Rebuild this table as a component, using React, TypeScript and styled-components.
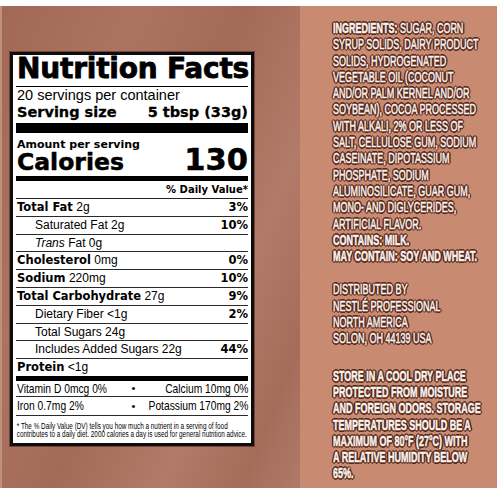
import React from 'react';
import styled, { createGlobalStyle } from 'styled-components';

const GlobalStyle = createGlobalStyle`
  html, body {
    margin: 0;
    padding: 0;
    background: #ffffff;
  }
  body {
    width: 500px;
    height: 500px;
    overflow: hidden;
  }
`;

const Package = styled.div`
  display: flex;
  width: 497px;
  height: 482px;
  margin-top: 6px;
`;

const LeftPanel = styled.div`
  width: 300px;
  box-sizing: border-box;
  padding: 46px 0 0 10px;
  background: linear-gradient(
    112deg,
    #a26856 0%,
    #ac7361 28%,
    #a46a58 50%,
    #b27a68 72%,
    #a56c5a 88%,
    #b07a68 100%
  );
  box-shadow: inset 2px 0 0 #c0907f;
`;

const RightPanel = styled.div`
  flex: 1;
  box-sizing: border-box;
  padding: 14px 0 0 33px;
  background: #c98a72;
  overflow: hidden;
`;

/* ---------- nutrition label ---------- */

const Label = styled.div`
  width: 244px;
  box-sizing: border-box;
  background: #fff;
  border: 3px solid #0d0d0d;
  box-shadow: 0 0 0 1px rgba(70, 35, 25, 0.55);
  padding: 0 3px;
  color: #000;
  font-family: 'Liberation Sans', Arial, sans-serif;
`;

const Title = styled.h1`
  margin: 0;
  padding: 0 0 4px 1px;
  font-family: 'DejaVu Sans', sans-serif;
  font-weight: 700;
  font-size: 28px;
  line-height: 27px;
  letter-spacing: -0.2px;
  -webkit-text-stroke: 0.8px #000;
  border-bottom: 1px solid #000;
  white-space: nowrap;
`;

const Servings = styled.div`
  padding-left: 1px;
  font-size: 14.5px;
  line-height: 17px;
`;

const ServingSize = styled.div`
  display: flex;
  justify-content: space-between;
  padding: 0 0 3px 1px;
  font-family: 'DejaVu Sans', sans-serif;
  font-weight: 700;
  font-size: 14.5px;
  line-height: 16px;
  -webkit-text-stroke: 0.3px #000;
`;

const Bar = styled.div<{ $h: number }>`
  height: ${({ $h }) => $h}px;
  background: #000;
`;

const AmountLabel = styled.div`
  padding: 5px 0 0 1px;
  font-family: 'DejaVu Sans', sans-serif;
  font-weight: 700;
  font-size: 11px;
  line-height: 13px;
`;

const CaloriesRow = styled.div`
  display: flex;
  justify-content: space-between;
  align-items: baseline;
  height: 25px;
  line-height: 18px;
  font-family: 'DejaVu Sans', sans-serif;
  font-weight: 700;
  -webkit-text-stroke: 0.5px #000;
`;

const CaloriesWord = styled.span`
  font-size: 23.5px;
  padding-left: 1px;
`;

const CaloriesValue = styled.span`
  font-size: 30.5px;
`;

const DVHeader = styled.div`
  height: 17px;
  line-height: 17px;
  text-align: right;
  font-family: 'DejaVu Sans', sans-serif;
  font-weight: 700;
  font-size: 10px;
  border-bottom: 1px solid #222;
`;

const Row = styled.div<{ $indent?: boolean; $last?: boolean }>`
  display: flex;
  justify-content: space-between;
  align-items: baseline;
  height: 16.8px;
  line-height: 16.8px;
  padding-left: ${({ $indent }) => ($indent ? 19 : 1)}px;
  border-bottom: ${({ $last }) => ($last ? 'none' : '1px solid #2a2a2a')};
  font-size: 12px;
  white-space: nowrap;
`;

const B = styled.b`
  font-family: 'DejaVu Sans', sans-serif;
  font-weight: 700;
  font-size: 11.5px;
`;

const Pct = styled.b`
  font-family: 'DejaVu Sans', sans-serif;
  font-weight: 700;
  font-size: 11.5px;
`;

const MineralRow = styled.div<{ $h: number }>`
  display: flex;
  align-items: center;
  height: ${({ $h }) => $h}px;
  padding-left: 1px;
  border-bottom: 1px solid #2a2a2a;
  font-family: 'Liberation Sans', sans-serif;
  font-size: 13px;
  white-space: nowrap;
`;

const Cell = styled.div<{ $end?: boolean }>`
  flex: 1 1 0;
  min-width: 0;
  display: flex;
  justify-content: ${({ $end }) => ($end ? 'flex-end' : 'flex-start')};
`;

const Squeeze = styled.span<{ $end?: boolean }>`
  flex-shrink: 0;
  display: inline-block;
  transform: scaleX(0.79);
  transform-origin: ${({ $end }) => ($end ? 'right' : 'left')} center;
`;

const Dot = styled.span`
  padding: 0 4px 0 6px;
  font-size: 11px;
`;

const Footnote = styled.div`
  padding: 6px 0 5px 1px;
  height: 16px;
  font-family: 'Liberation Sans', sans-serif;
  font-size: 8.5px;
  line-height: 8px;
  white-space: nowrap;
  transform: scaleX(0.75);
  transform-origin: left top;
`;

/* ---------- side copy ---------- */

const halo = '#57291c';

const Copy = styled.div`
  font-family: 'Liberation Sans', sans-serif;
  font-size: 15.5px;
  line-height: 16.3px;
  color: #fbf3ee;
  white-space: nowrap;
  transform: scaleX(0.58);
  transform-origin: left top;
  -webkit-text-stroke: 0.5px #fbf3ee;
  text-shadow: 2.8px 0 0.5px ${halo}, -2.8px 0 0.5px ${halo}, 0 1.6px 0.5px ${halo},
    0 -1.6px 0.5px ${halo}, 2px 1.2px 0.5px ${halo}, -2px -1.2px 0.5px ${halo},
    2px -1.2px 0.5px ${halo}, -2px 1.2px 0.5px ${halo};
`;

const Para = styled.p<{ $gap: number; $bold?: boolean }>`
  margin: 0 0 ${({ $gap }) => $gap}px;
  font-weight: ${({ $bold }) => ($bold ? 700 : 400)};
`;

const nutrients = [
  { name: 'Total Fat', amount: '2g', pct: '3%', bold: true },
  { name: 'Saturated Fat', amount: '2g', pct: '10%', indent: true },
  { name: 'Trans', amount: 'Fat 0g', pct: '', indent: true, italic: true },
  { name: 'Cholesterol', amount: '0mg', pct: '0%', bold: true },
  { name: 'Sodium', amount: '220mg', pct: '10%', bold: true },
  { name: 'Total Carbohydrate', amount: '27g', pct: '9%', bold: true },
  { name: 'Dietary Fiber', amount: '<1g', pct: '2%', indent: true },
  { name: 'Total Sugars', amount: '24g', pct: '', indent: true },
  { name: 'Includes Added Sugars', amount: '22g', pct: '44%', indent: true },
  { name: 'Protein', amount: '<1g', pct: '', bold: true, last: true },
];

export default function App() {
  return (
    <>
      <GlobalStyle />
      <Package>
        <LeftPanel>
          <Label>
            <Title>Nutrition Facts</Title>
            <Servings>20 servings per container</Servings>
            <ServingSize>
              <span>Serving size</span>
              <span>5 tbsp (33g)</span>
            </ServingSize>
            <Bar $h={10} />
            <AmountLabel>Amount per serving</AmountLabel>
            <CaloriesRow>
              <CaloriesWord>Calories</CaloriesWord>
              <CaloriesValue>130</CaloriesValue>
            </CaloriesRow>
            <Bar $h={5} />
            <DVHeader>% Daily Value*</DVHeader>
            {nutrients.map((n) => (
              <Row key={n.name} $indent={n.indent} $last={n.last}>
                <span>
                  {n.bold ? <B>{n.name}</B> : n.italic ? <i>{n.name}</i> : n.name} {n.amount}
                </span>
                <Pct>{n.pct}</Pct>
              </Row>
            ))}
            <Bar $h={5} />
            <MineralRow $h={15}>
              <Cell>
                <Squeeze>Vitamin D 0mcg 0%</Squeeze>
              </Cell>
              <Dot>•</Dot>
              <Cell $end>
                <Squeeze $end>Calcium 10mg 0%</Squeeze>
              </Cell>
            </MineralRow>
            <MineralRow $h={18}>
              <Cell>
                <Squeeze>Iron 0.7mg 2%</Squeeze>
              </Cell>
              <Dot>•</Dot>
              <Cell $end>
                <Squeeze $end>Potassium 170mg 2%</Squeeze>
              </Cell>
            </MineralRow>
            <Footnote>
              * The % Daily Value (DV) tells you how much a nutrient in a serving of food
              <br />
              contributes to a daily diet. 2000 calories a day is used for general nutrition advice.
            </Footnote>
          </Label>
        </LeftPanel>
        <RightPanel>
          <Copy>
            <Para $gap={17}>
              <b>INGREDIENTS:</b> SUGAR, CORN
              <br />
              SYRUP SOLIDS, DAIRY PRODUCT
              <br />
              SOLIDS, HYDROGENATED
              <br />
              VEGETABLE OIL (COCONUT
              <br />
              AND/OR PALM KERNEL AND/OR
              <br />
              SOYBEAN), COCOA PROCESSED
              <br />
              WITH ALKALI, 2% OR LESS OF
              <br />
              SALT, CELLULOSE GUM, SODIUM
              <br />
              CASEINATE, DIPOTASSIUM
              <br />
              PHOSPHATE, SODIUM
              <br />
              ALUMINOSILICATE, GUAR GUM,
              <br />
              MONO- AND DIGLYCERIDES,
              <br />
              ARTIFICIAL FLAVOR.
              <br />
              <b>CONTAINS: MILK.</b>
              <br />
              <b>MAY CONTAIN: SOY AND WHEAT.</b>
            </Para>
            <Para $gap={21}>
              DISTRIBUTED BY
              <br />
              NESTLÉ PROFESSIONAL
              <br />
              NORTH AMERICA
              <br />
              SOLON, OH 44139 USA
            </Para>
            <Para $gap={0} $bold>
              STORE IN A COOL DRY PLACE
              <br />
              PROTECTED FROM MOISTURE
              <br />
              AND FOREIGN ODORS. STORAGE
              <br />
              TEMPERATURES SHOULD BE A
              <br />
              MAXIMUM OF 80°F (27°C) WITH
              <br />
              A RELATIVE HUMIDITY BELOW
              <br />
              65%.
            </Para>
          </Copy>
        </RightPanel>
      </Package>
    </>
  );
}
